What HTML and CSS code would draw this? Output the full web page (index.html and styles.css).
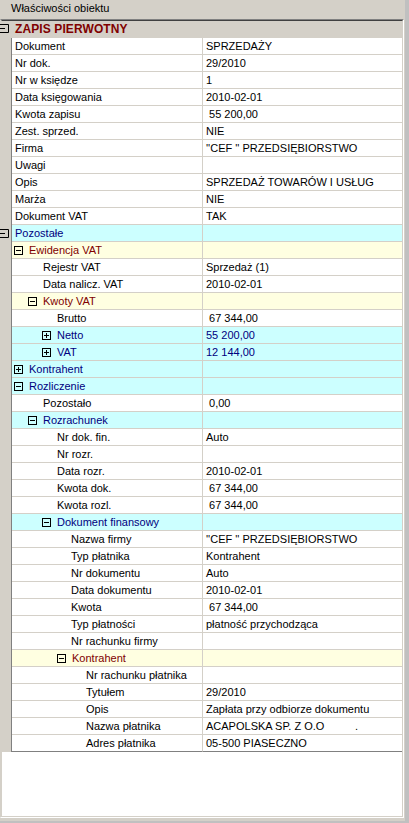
FILE: index.html
```html
<!DOCTYPE html>
<html lang="pl">
<head>
<meta charset="utf-8">
<title>Właściwości obiektu</title>
<link rel="stylesheet" href="styles.css">
</head>
<body>
<div class="window">
  <div class="title">Właściwości obiektu</div>
  <div class="frame">
    <div class="frame-in">
      <div class="tree">
        <div class="row head">
          <span class="gbox"><svg width="9" height="9" viewBox="0 0 9 9"><path d="M0 0.5H8.5V8.5H0M0 4.5H5" fill="none" stroke="#000" stroke-width="1"/></svg></span>
          <span class="head-text">ZAPIS PIERWOTNY</span>
        </div>

        <div class="row"><div class="gut"></div><div class="name l0">Dokument</div><div class="val">SPRZEDAŻY</div></div>
        <div class="row"><div class="gut"></div><div class="name l0">Nr dok.</div><div class="val">29/2010</div></div>
        <div class="row"><div class="gut"></div><div class="name l0">Nr w księdze</div><div class="val">1</div></div>
        <div class="row"><div class="gut"></div><div class="name l0">Data księgowania</div><div class="val">2010-02-01</div></div>
        <div class="row"><div class="gut"></div><div class="name l0">Kwota zapisu</div><div class="val"> 55 200,00</div></div>
        <div class="row"><div class="gut"></div><div class="name l0">Zest. sprzed.</div><div class="val">NIE</div></div>
        <div class="row"><div class="gut"></div><div class="name l0">Firma</div><div class="val">''CEF '' PRZEDSIĘBIORSTWO</div></div>
        <div class="row"><div class="gut"></div><div class="name l0">Uwagi</div><div class="val"></div></div>
        <div class="row"><div class="gut"></div><div class="name l0">Opis</div><div class="val">SPRZEDAŻ TOWARÓW I USŁUG</div></div>
        <div class="row"><div class="gut"></div><div class="name l0">Marża</div><div class="val">NIE</div></div>
        <div class="row"><div class="gut"></div><div class="name l0">Dokument VAT</div><div class="val">TAK</div></div>

        <div class="row cyan"><div class="gut"><span class="gbox gbox-row"><svg width="9" height="9" viewBox="0 0 9 9"><path d="M0 0.5H8.5V8.5H0M0 4.5H5" fill="none" stroke="#000" stroke-width="1"/></svg></span></div><div class="name l0">Pozostałe</div><div class="val"></div></div>
        <div class="row yellow"><div class="gut"></div><div class="name g1"><span class="box minus"></span>Ewidencja VAT</div><div class="val"></div></div>
        <div class="row"><div class="gut"></div><div class="name l2">Rejestr VAT</div><div class="val">Sprzedaż (1)</div></div>
        <div class="row"><div class="gut"></div><div class="name l2">Data nalicz. VAT</div><div class="val">2010-02-01</div></div>
        <div class="row yellow"><div class="gut"></div><div class="name g2"><span class="box minus"></span>Kwoty VAT</div><div class="val"></div></div>
        <div class="row"><div class="gut"></div><div class="name l3">Brutto</div><div class="val"> 67 344,00</div></div>
        <div class="row cyan"><div class="gut"></div><div class="name g3"><span class="box plus"></span>Netto</div><div class="val">55 200,00</div></div>
        <div class="row cyan"><div class="gut"></div><div class="name g3"><span class="box plus"></span>VAT</div><div class="val">12 144,00</div></div>
        <div class="row cyan"><div class="gut"></div><div class="name g1"><span class="box plus"></span>Kontrahent</div><div class="val"></div></div>
        <div class="row cyan"><div class="gut"></div><div class="name g1"><span class="box minus"></span>Rozliczenie</div><div class="val"></div></div>
        <div class="row"><div class="gut"></div><div class="name l2">Pozostało</div><div class="val"> 0,00</div></div>
        <div class="row cyan"><div class="gut"></div><div class="name g2"><span class="box minus"></span>Rozrachunek</div><div class="val"></div></div>
        <div class="row"><div class="gut"></div><div class="name l3">Nr dok. fin.</div><div class="val">Auto</div></div>
        <div class="row"><div class="gut"></div><div class="name l3">Nr rozr.</div><div class="val"></div></div>
        <div class="row"><div class="gut"></div><div class="name l3">Data rozr.</div><div class="val">2010-02-01</div></div>
        <div class="row"><div class="gut"></div><div class="name l3">Kwota dok.</div><div class="val"> 67 344,00</div></div>
        <div class="row"><div class="gut"></div><div class="name l3">Kwota rozl.</div><div class="val"> 67 344,00</div></div>
        <div class="row cyan"><div class="gut"></div><div class="name g3"><span class="box minus"></span>Dokument finansowy</div><div class="val"></div></div>
        <div class="row"><div class="gut"></div><div class="name l4">Nazwa firmy</div><div class="val">''CEF '' PRZEDSIĘBIORSTWO</div></div>
        <div class="row"><div class="gut"></div><div class="name l4">Typ płatnika</div><div class="val">Kontrahent</div></div>
        <div class="row"><div class="gut"></div><div class="name l4">Nr dokumentu</div><div class="val">Auto</div></div>
        <div class="row"><div class="gut"></div><div class="name l4">Data dokumentu</div><div class="val">2010-02-01</div></div>
        <div class="row"><div class="gut"></div><div class="name l4">Kwota</div><div class="val"> 67 344,00</div></div>
        <div class="row"><div class="gut"></div><div class="name l4">Typ płatności</div><div class="val">płatność przychodząca</div></div>
        <div class="row"><div class="gut"></div><div class="name l4">Nr rachunku firmy</div><div class="val"></div></div>
        <div class="row yellow"><div class="gut"></div><div class="name g4"><span class="box minus"></span>Kontrahent</div><div class="val"></div></div>
        <div class="row"><div class="gut"></div><div class="name l5">Nr rachunku płatnika</div><div class="val"></div></div>
        <div class="row"><div class="gut"></div><div class="name l5">Tytułem</div><div class="val">29/2010</div></div>
        <div class="row"><div class="gut"></div><div class="name l5">Opis</div><div class="val">Zapłata przy odbiorze dokumentu</div></div>
        <div class="row"><div class="gut"></div><div class="name l5">Nazwa płatnika</div><div class="val">ACAPOLSKA SP. Z O.O          .</div></div>
        <div class="row last"><div class="gut"></div><div class="name l5">Adres płatnika</div><div class="val">05-500 PIASECZNO</div></div>
      </div>
    </div>
  </div>
</div>
</body>
</html>
```

FILE: styles.css
```css
* { box-sizing: border-box; }

html, body {
  margin: 0;
  padding: 0;
  background: #d4d0c8;
}

body {
  font-family: "Liberation Sans", Arial, sans-serif;
  font-size: 11px;
  color: #000;
}

.window {
  width: 409px;
  height: 823px;
  border-right: 4px solid #c0c0c0;
  border-bottom: 2px solid #c0c0c0;
  background: #d4d0c8;
}

.title {
  height: 19px;
  line-height: 16px;
  padding-left: 11px;
  white-space: nowrap;
}

.frame {
  width: 404px;
  height: 799px;
  border-top: 1px solid #808080;
  border-left: 1px solid #d4d0c8;
  border-right: 1px solid #ffffff;
  border-bottom: 1px solid #ffffff;
}

.frame-in {
  height: 100%;
  border-top: 1px solid #404040;
  border-left: 1px solid #d4d0c8;
  border-right: 1px solid #d4d0c8;
  border-bottom: 1px solid #d4d0c8;
  background: #ffffff;
}

.tree {
  display: flex;
  flex-direction: column;
}

.row {
  display: flex;
  height: 17px;
  line-height: 16px;
  white-space: pre;
}

.row.head {
  position: relative;
  background: #d4d0c8;
  align-items: flex-start;
}

.head-text {
  padding-left: 13px;
  font-size: 12px;
  font-weight: bold;
  color: #800000;
  letter-spacing: 0.1px;
}

.gbox {
  position: absolute;
  left: -2px;
  top: 3px;
  width: 9px;
  height: 9px;
  display: block;
}

.gbox svg { display: block; }

.gut {
  position: relative;
  width: 10px;
  flex: none;
  background: #d4d0c8;
  border-right: 1px solid #808080;
}

.gbox-row {
  left: -2px;
  top: 4px;
}

.name {
  width: 191px;
  flex: none;
  display: flex;
  align-items: flex-start;
  border-right: 1px solid #d4d0c8;
  border-bottom: 1px solid #d4d0c8;
  overflow: hidden;
}

.val {
  flex: 1;
  padding-left: 3px;
  border-bottom: 1px solid #d4d0c8;
  overflow: hidden;
}

.row.last .name,
.row.last .val {
  border-bottom-color: #808080;
}

.l0 { padding-left: 3px; }
.l2 { padding-left: 31px; }
.l3 { padding-left: 45px; }
.l4 { padding-left: 59px; }
.l5 { padding-left: 74px; }

.g1 { padding-left: 2px; }
.g2 { padding-left: 16px; }
.g3 { padding-left: 30px; }
.g4 { padding-left: 45px; }

.cyan .name, .cyan .val { background: #ccffff; }
.yellow .name, .yellow .val { background: #ffffe1; }

.cyan .name { color: #000080; }
.cyan .val { color: #000080; }
.yellow .name { color: #800000; }

.box {
  position: relative;
  flex: none;
  width: 9px;
  height: 9px;
  margin-top: 4px;
  margin-right: 6px;
  border: 1px solid #000;
}

.box::before {
  content: "";
  position: absolute;
  left: 1px;
  top: 3px;
  width: 5px;
  height: 1px;
  background: #000;
}

.box.plus::after {
  content: "";
  position: absolute;
  left: 3px;
  top: 1px;
  width: 1px;
  height: 5px;
  background: #000;
}
```
